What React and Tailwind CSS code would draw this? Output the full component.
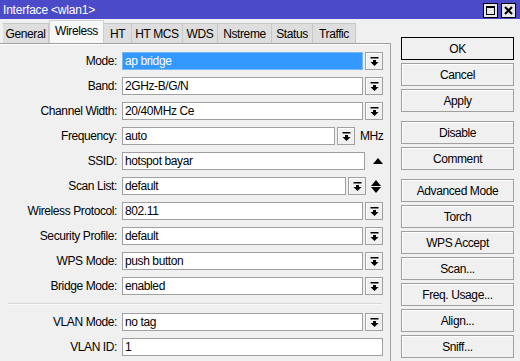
const tabs = [
  { name: "General", w: "w-[46px]" },
  { name: "Wireless", w: "w-[55px]" },
  { name: "HT", w: "w-[28px]" },
  { name: "HT MCS", w: "w-[51px]" },
  { name: "WDS", w: "w-[35px]" },
  { name: "Nstreme", w: "w-[54px]" },
  { name: "Status", w: "w-[41px]" },
  { name: "Traffic", w: "w-[43px]" },
];

const buttonGroups = [
  ["OK", "Cancel", "Apply"],
  ["Disable", "Comment"],
  ["Advanced Mode", "Torch", "WPS Accept", "Scan...", "Freq. Usage...", "Align...", "Sniff...", ""],
];

function DropIcon() {
  return (
    <svg width="9" height="9" viewBox="0 0 9 9">
      <rect x="0.5" y="0" width="8" height="1.5" fill="#000" />
      <path d="M3 3h3v2h2.5L4.5 9 0.5 5H3z" fill="#000" />
    </svg>
  );
}

function DropButton() {
  return (
    <div className="w-[18px] h-[18px] ml-[2px] flex items-center justify-center border border-[#a0a0a0] bg-[#f0f0f0] shadow-[inset_1px_1px_0_#fff]">
      <DropIcon />
    </div>
  );
}

function Field({ value, selected, className = "w-[241px]" }) {
  return (
    <div
      className={`h-[18px] ${className} border flex items-center pl-[2px] whitespace-nowrap overflow-hidden ${
        selected ? "bg-[#3399ff] text-white border-[#7ab8f5]" : "bg-white border-[#a0a0a0]"
      }`}
    >
      {value}
    </div>
  );
}

function Row({ label, children }) {
  return (
    <div className="flex items-center h-[18px]">
      <div className="w-[118px] text-right pr-[1px] whitespace-nowrap">{label}</div>
      <div className="ml-[4px] flex items-center">{children}</div>
    </div>
  );
}

function UpArrow() {
  return (
    <svg width="10" height="6" viewBox="0 0 10 6">
      <path d="M0 6L5 0l5 6z" fill="#000" />
    </svg>
  );
}

export default function App() {
  return (
    <div className="w-[520px] h-[361px] overflow-hidden bg-[#f0f0f0] text-[12px] tracking-[-0.4px] leading-none text-black font-['Liberation_Sans',Arial,sans-serif]">
      {/* title bar */}
      <div className="h-[19px] bg-[#4b4bc9] flex items-center justify-between pl-[3px] pr-[4px]">
        <span className="text-white text-[12px] tracking-[-0.2px]">{"Interface <wlan1>"}</span>
        <div className="flex gap-[3px] pt-[1px]">
          <div className="w-[15px] h-[15px] border border-black bg-[#e8e8e8] flex items-center justify-center">
            <div className="w-[9px] h-[9px] border border-black border-t-2" />
          </div>
          <div className="w-[15px] h-[15px] border border-black bg-[#e8e8e8] flex items-center justify-center">
            <svg width="9" height="9" viewBox="0 0 9 9">
              <path d="M1 1l7 7M8 1L1 8" stroke="#000" strokeWidth="2" />
            </svg>
          </div>
        </div>
      </div>

      <div className="flex">
        {/* left: tabs and form */}
        <div className="w-[391px] shrink-0">
          <div className="h-[24px] flex items-end pl-[3px]">
            {tabs.map((t) => (
              <div
                key={t.name}
                className={`${t.w} flex items-center justify-center whitespace-nowrap ${
                  t.name === "Wireless"
                    ? "h-[23px] border border-b-0 border-[#d0d0d0] bg-[#f8f8f8] pb-[3px]"
                    : "h-[20px] border-r border-t border-[#c8c8c8] bg-[#dedede]"
                }`}
              >
                {t.name}
              </div>
            ))}
          </div>

          <div className="h-[318px] border-t border-r border-[#a0a0a0] shadow-[inset_0_1px_0_#fff] flex flex-col gap-[7px] pt-[8px]">
            <Row label="Mode:">
              <Field value="ap bridge" selected />
              <DropButton />
            </Row>
            <Row label="Band:">
              <Field value="2GHz-B/G/N" />
              <DropButton />
            </Row>
            <Row label="Channel Width:">
              <Field value="20/40MHz Ce" />
              <DropButton />
            </Row>
            <Row label="Frequency:">
              <Field value="auto" className="w-[213px]" />
              <DropButton />
              <span className="ml-[5px]">MHz</span>
            </Row>
            <Row label="SSID:">
              <Field value="hotspot bayar" className="w-[243px]" />
              <span className="ml-[8px] flex">
                <UpArrow />
              </span>
            </Row>
            <Row label="Scan List:">
              <Field value="default" className="w-[224px]" />
              <DropButton />
              <span className="ml-[5px] flex flex-col gap-[1px]">
                <UpArrow />
                <span className="rotate-180 flex">
                  <UpArrow />
                </span>
              </span>
            </Row>
            <Row label="Wireless Protocol:">
              <Field value="802.11" />
              <DropButton />
            </Row>
            <Row label="Security Profile:">
              <Field value="default" />
              <DropButton />
            </Row>
            <Row label="WPS Mode:">
              <Field value="push button" />
              <DropButton />
            </Row>
            <Row label="Bridge Mode:">
              <Field value="enabled" />
              <DropButton />
            </Row>
            <div className="ml-[8px] w-[374px] h-[2px] border-t border-[#d8d8d8] bg-white/60 my-[1px]" />
            <Row label="VLAN Mode:">
              <Field value="no tag" />
              <DropButton />
            </Row>
            <Row label="VLAN ID:">
              <Field value="1" className="w-[261px]" />
            </Row>
          </div>
        </div>

        {/* right: buttons */}
        <div className="ml-[10px] pt-[18px] flex flex-col gap-[9px]">
          {buttonGroups.map((g, gi) => (
            <div key={gi} className="flex flex-col gap-[3px]">
              {g.map((b, bi) => (
                <div
                  key={bi}
                  className={`w-[113px] h-[23px] flex items-center justify-center bg-[#f0f0f0] border ${
                    b === "OK" ? "border-black" : "border-[#a0a0a0] shadow-[inset_1px_1px_0_#fff]"
                  }`}
                >
                  {b}
                </div>
              ))}
            </div>
          ))}
        </div>
      </div>
    </div>
  );
}
